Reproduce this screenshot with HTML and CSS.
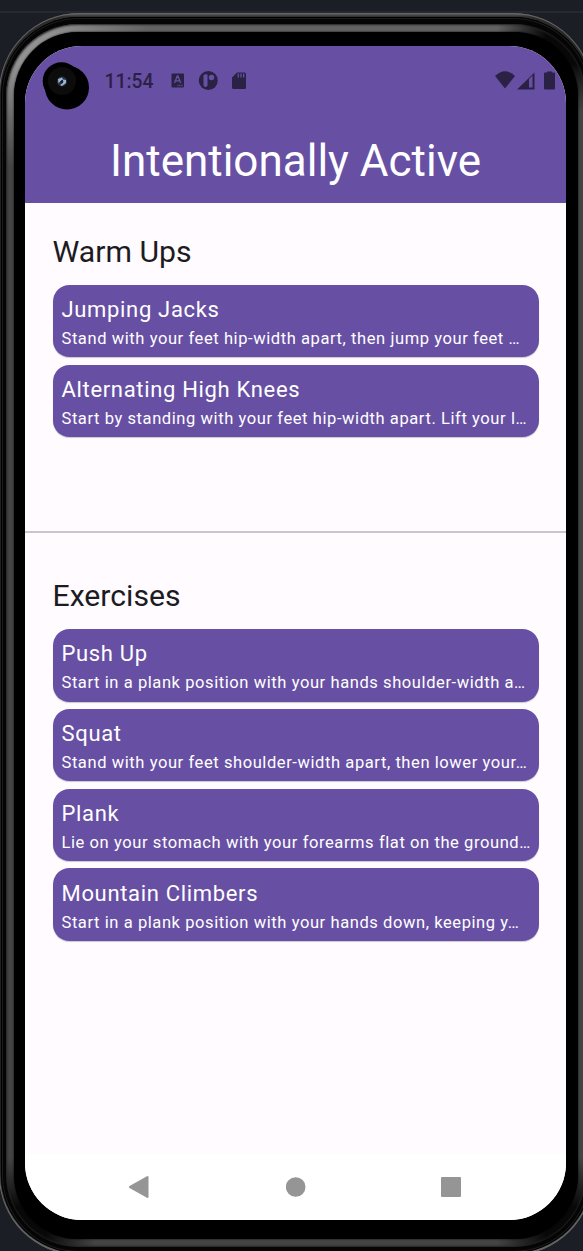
FILE: index.html
```html
<!DOCTYPE html>
<html lang="en">
<head>
<meta charset="utf-8">
<title>Intentionally Active</title>
<link rel="stylesheet" href="styles.css">
</head>
<body>
<div class="device">
  <div class="metal">
    <div class="groove">
      <div class="rim">
        <div class="bezel">
          <main class="screen">
            <header class="header">
              <div class="status">
                <svg class="camera" width="50" height="52" viewBox="0 0 50 52">
                  <circle cx="19.500" cy="21" r="18.800" fill="#000"/><circle cx="25" cy="27.500" r="22" fill="#000"/>
                  <circle cx="20" cy="21" r="14" fill="#0c0c0d"/>
                  <circle cx="20" cy="21.500" r="5" fill="#243244"/>
                  <path d="M16 19l4-1.500 1 2-3 2-1.500 2zM21 19.500l3 .500v3l-4 3-2-1 3-2z" fill="#9db4cf"/>
                  <circle cx="20" cy="21.500" r="1.300" fill="#151c29"/>
                </svg>
                <span class="time">11:54</span>
                <svg class="notices" width="78" height="20" viewBox="0 0 78 20">
                  <rect x=".5" y="2.500" width="12.500" height="14" rx="1"/>
                  <path class="cut-line" d="M3.500 12l2.800-7h.6l2.800 7M4.700 9.800h3.800M6.500 14.500h1M8.500 14.500h1M10.500 14.500h1"/>
                  <circle cx="37.300" cy="9.500" r="9.500"/>
                  <path class="cut" d="M32.500 4q2-1 4-.5v9.500a2 2 0 0 1-4 1.500z"/><circle class="cut" cx="40.500" cy="6.500" r="2.700"/>
                  <path d="M66 1.500h7.500a1.500 1.500 0 0 1 1.500 1.500v13.500a1.500 1.500 0 0 1-1.500 1.500H62.500a1.500 1.500 0 0 1-1.500-1.500V6.500z"/>
                  <path class="cut-line" d="M67.300 2.500v4M70 2.500v4M72.700 2.500v4"/>
                </svg>
                <svg class="signals" width="62" height="20" viewBox="0 0 62 20">
                  <path d="M0 5Q10-4.500 20 5L10 17.500z"/>
                  <path fill-rule="evenodd" d="M22 18.500L39.500 1.500v17zM34 8V16.500h3.500V4.500z"/>
                  <path d="M52 1.500V.5h5v1h2a1 1 0 0 1 1 1v15a1 1 0 0 1-1 1h-9a1 1 0 0 1-1-1v-15a1 1 0 0 1 1-1z"/>
                </svg>
              </div>
              <h1 class="title">Intentionally Active</h1>
            </header>
            <section class="section warmups">
              <h2 class="heading">Warm Ups</h2>
              <article class="card"><h3 class="name">Jumping Jacks</h3><p class="desc">Stand with your feet hip-width apart, then jump your feet …</p></article>
              <article class="card"><h3 class="name">Alternating High Knees</h3><p class="desc">Start by standing with your feet hip-width apart. Lift your l…</p></article>
            </section>
            <section class="section exercises">
              <h2 class="heading">Exercises</h2>
              <article class="card"><h3 class="name">Push Up</h3><p class="desc">Start in a plank position with your hands shoulder-width a…</p></article>
              <article class="card"><h3 class="name">Squat</h3><p class="desc">Stand with your feet shoulder-width apart, then lower your…</p></article>
              <article class="card"><h3 class="name">Plank</h3><p class="desc">Lie on your stomach with your forearms flat on the ground…</p></article>
              <article class="card"><h3 class="name">Mountain Climbers</h3><p class="desc">Start in a plank position with your hands down, keeping y…</p></article>
            </section>
            <nav class="nav">
              <svg width="22" height="24" viewBox="0 0 22 24"><path d="M1.500 11L19 1.200Q20.500 .5 20.500 2v20q0 1.500-1.500 .8L1.500 13q-1.500-1 0-2z"/></svg>
              <svg width="20" height="20" viewBox="0 0 20 20"><circle cx="9.700" cy="10" r="9.800"/></svg>
              <svg width="20" height="20" viewBox="0 0 20 20"><rect width="20" height="20" rx="1"/></svg>
            </nav>
          </main>
        </div>
      </div>
    </div>
  </div>
</div>
</body>
</html>
```
FILE: styles.css
```css
* { box-sizing: border-box; }
body {
  margin: 0;
  height: 1251px;
  overflow: hidden;
  background: linear-gradient(#1c1e26 11px, #262833 11px 13px, #1c1e26 13px);
  font-family: Roboto, sans-serif;
}
h1, h2, h3, p { margin: 0; font-weight: 400; }
.device { width: 594px; height: 1255px; margin-left: -1px; padding-top: 13px; }
.metal {
  height: 1242px;
  padding: 4px 2px 2px;
  border-radius: 80px;
  background: linear-gradient(#666, #2c2c2c 4px, #222 70px, #222 1150px, #666);
  box-shadow: inset 0 0 0 1px #666;
}
.groove {
  height: 100%;
  padding: 7px 5px 6px;
  border-radius: 78px;
  background: #050505;
  box-shadow: inset 0 0 0 1px #000, inset 0 0 0 2px #1c1c1c;
}
.rim {
  height: 100%;
  padding: 8px;
  border-radius: 72px;
  background:
    radial-gradient(circle at 25px 25px, #929292 20px, transparent 120px),
    radial-gradient(circle at 565px 15px, #080808 25px, transparent 75px),
    radial-gradient(circle at 15px 1208px, #080808 25px, transparent 75px),
    radial-gradient(circle at 565px 1208px, #080808 25px, transparent 75px),
    linear-gradient(#646464, #444 90px);
  box-shadow: inset 0 0 2px 1px #222;
}
.bezel {
  height: 100%;
  padding: 14px 12px 19px 11px;
  border-radius: 64px;
  background: #000;
  box-shadow: 0 0 2px #000;
}
.screen {
  width: 541px;
  height: 1174px;
  border-radius: 57px;
  overflow: hidden;
  background: #fffbff;
  display: flex;
  flex-direction: column;
}
.header { height: 156.500px; background: #6750a4; flex: none; }
.status {
  height: 70px;
  display: flex;
  align-items: center;
  padding: 0 9px 0 17px;
  fill: #2b2144;
}
.camera { margin-top: 10px; flex: none; }
.time { margin-left: 12.500px; font-size: 19.300px; font-weight: 500; color: #2b2144; width: 66.500px; }
.cut { fill: #6750a4; }
.cut-line { fill: none; stroke: #6750a4; stroke-width: 1.300; }
.signals { margin-left: auto; }
.title { padding-top: 18px; text-align: center; color: #fff; font-size: 44px; line-height: 55px; }
.section { padding: 29px 27.500px 0; flex: none; }
.warmups { height: 330.500px; border-bottom: 2px solid #cac4cf; }
.exercises { padding-top: 43px; }
.heading { font-size: 30.200px; line-height: 39px; color: #1c1b1f; margin-bottom: 14.250px; }
.exercises .heading { margin-bottom: 14px; }
.card {
  height: 72.500px;
  margin-bottom: 7.250px;
  padding: 8.250px 9px;
  border-radius: 16.500px;
  background: #6750a4;
  color: #fff;
  box-shadow: 0 1px 1px #0003;
}
.name { font-size: 22px; line-height: 33px; letter-spacing: .67px; white-space: nowrap; }
.desc { font-size: 16.530px; line-height: 26.500px; letter-spacing: .58px; white-space: nowrap; }
.nav {
  margin-top: auto;
  height: 66px;
  background: #fff;
  fill: #959595;
  display: flex;
  align-items: center;
  justify-content: space-between;
  padding: 0 105px 0 103px;
}
```
